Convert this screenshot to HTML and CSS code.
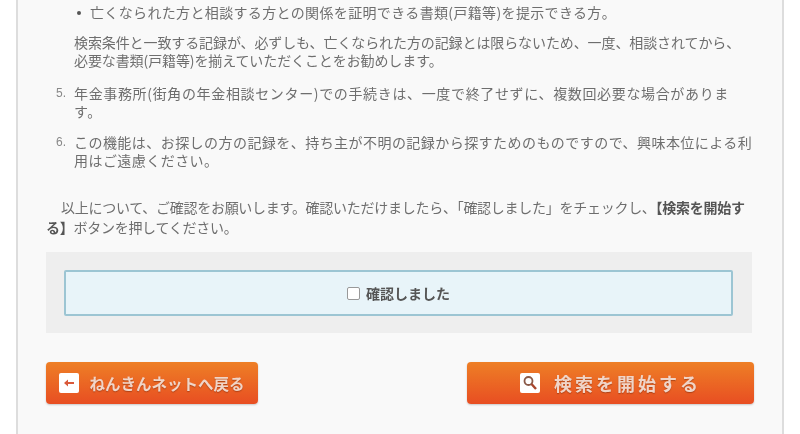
FILE: index.html
```html
<!DOCTYPE html>
<html lang="ja">
<head>
    <meta charset="UTF-8">
    <title>ねんきんネット</title>
    <link rel="stylesheet" href="styles.css">
</head>
<body>
    <div class="sheet">
        <div class="notes">
            <ul class="bullets">
                <li>亡くなられた方と相談する方との関係を証明できる書類(戸籍等)を提示できる方。</li>
            </ul>
            <p class="note">検索条件と一致する記録が、必ずしも、亡くなられた方の記録とは限らないため、一度、相談されてから、<br>必要な書類(戸籍等)を揃えていただくことをお勧めします。</p>
            <ol class="items" start="5">
                <li>年金事務所(街角の年金相談センター)での手続きは、一度で終了せずに、複数回必要な場合がありま<br>す。</li>
                <li>この機能は、お探しの方の記録を、持ち主が不明の記録から探すためのものですので、興味本位による利<br>用はご遠慮ください。</li>
            </ol>
        </div>
        <p class="confirm-text">以上について、ご確認をお願いします。確認いただけましたら、「確認しました」をチェックし、<strong>【検索を開始す<br>る】</strong>ボタンを押してください。</p>
        <div class="check-area">
            <label class="check-box"><span class="check-mark"></span>確認しました</label>
        </div>
        <div class="buttons">
            <a href="#" class="btn btn-back">
                <svg class="btn-icon" width="20" height="20" viewBox="0 0 20 20">
                    <rect width="20" height="20" rx="2" fill="#fff"/>
                    <path d="M5 10l4-3.500v2.500h6v2H9v2.500z" fill="#d9593a"/>
                </svg>
                ねんきんネットへ戻る
            </a>
            <a href="#" class="btn btn-search">
                <svg class="btn-icon" width="20" height="20" viewBox="0 0 20 20">
                    <rect width="20" height="20" rx="2" fill="#fff"/>
                    <circle cx="8.500" cy="8" r="4" fill="none" stroke="#8a5a48" stroke-width="1.800"/>
                    <path d="M11.500 11l4.500 5" stroke="#a8452c" stroke-width="2.400"/>
                </svg>
                検索を開始する
            </a>
        </div>
    </div>
</body>
</html>
```

FILE: styles.css
```css
* {
    margin: 0;
    padding: 0;
    box-sizing: border-box;
}

html, body {
    height: 434px;
    overflow: hidden;
    background: #fff;
}

body {
    font-family: "Noto Sans CJK JP", "Liberation Sans", sans-serif;
    font-size: 14px;
    color: #6e6e6e;
    padding: 0 16px;
}

.sheet {
    height: 434px;
    background: #f9f9f9;
    border-left: 2px solid #ddd;
    border-right: 2px solid #ddd;
    padding: 0 30px 0 28px;
    filter: blur(0.6px);
}

.notes {
    padding: 3px 0 0 28px;
    line-height: 18px;
    white-space: nowrap;
}

.bullets {
    list-style: none;
    padding-left: 16px;
    margin-bottom: 12px;
    letter-spacing: 0.35px;
}

.bullets li {
    position: relative;
}

.bullets li::before {
    content: "";
    position: absolute;
    left: -13px;
    top: 8px;
    width: 4px;
    height: 4px;
    border-radius: 50%;
    background: #555;
}

.note {
    margin-bottom: 15px;
    letter-spacing: -0.1px;
}

.items {
    list-style: none;
    counter-reset: item 4;
    letter-spacing: 0.45px;
}

.items li {
    counter-increment: item;
    position: relative;
    margin-bottom: 13px;
}

.items li:first-child {
    letter-spacing: 0.65px;
}

.items li::before {
    content: counter(item) ".";
    position: absolute;
    left: -18px;
    top: 0;
    font: 12px/18px "Liberation Sans", sans-serif;
    letter-spacing: 0;
    color: #888;
}

.confirm-text {
    margin-top: 28px;
    line-height: 20px;
    text-indent: 15px;
    white-space: nowrap;
    letter-spacing: -0.27px;
}

.confirm-text strong {
    color: #555;
}

.check-area {
    margin-top: 15px;
    height: 81px;
    padding: 18px 19px 18px 18px;
    background: #eee;
}

.check-box {
    display: flex;
    align-items: center;
    justify-content: center;
    gap: 6px;
    height: 46px;
    background: #e8f4f9;
    border: 2px solid #9cc5d3;
    border-radius: 2px;
    font-weight: bold;
    font-size: 14px;
    line-height: 1;
    color: #555;
}

.check-mark {
    width: 13px;
    height: 13px;
    background: #fff;
    border: 1px solid #999;
    border-radius: 2px;
}

.buttons {
    display: flex;
    justify-content: space-between;
    margin-top: 29px;
    margin-right: -2px;
}

.btn {
    display: flex;
    align-items: center;
    justify-content: center;
    height: 42px;
    border-radius: 4px;
    background: linear-gradient(#ee7f26, #e84e22);
    box-shadow: 0 1px 2px rgba(0,0,0,0.2);
    color: #f0d5c8;
    font-weight: bold;
    text-decoration: none;
    text-shadow: 0 1px 1px rgba(120,40,10,0.5);
}

.btn-back {
    width: 212px;
    gap: 10px;
    font-size: 15.500px;
}

.btn-search {
    width: 287px;
    gap: 14px;
    font-size: 18px;
    letter-spacing: 3px;
}
```
